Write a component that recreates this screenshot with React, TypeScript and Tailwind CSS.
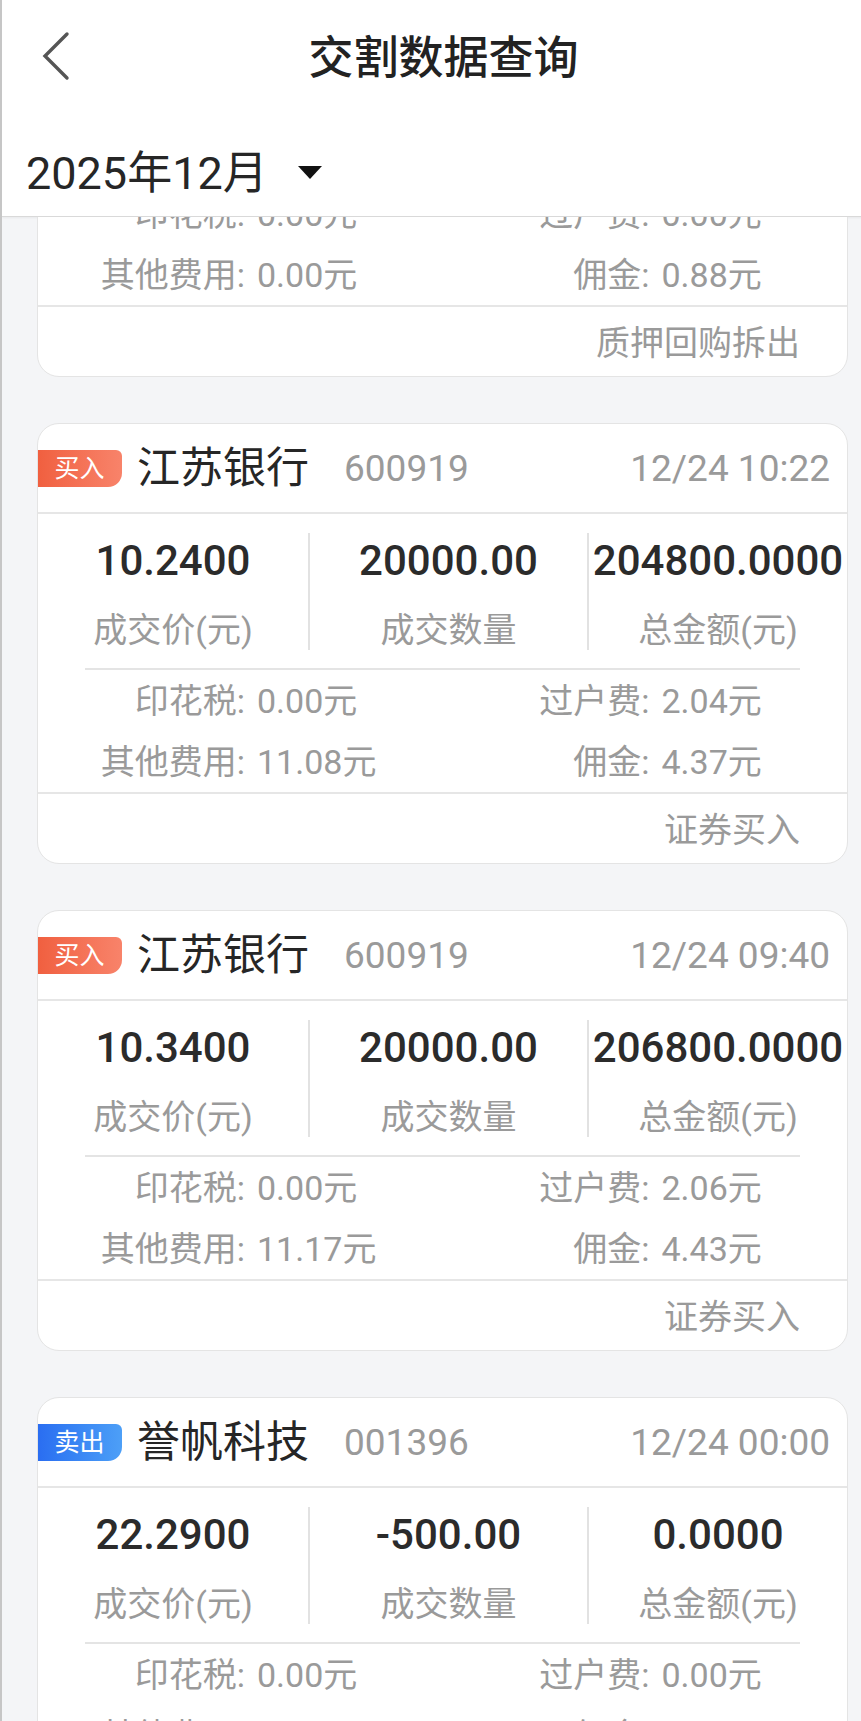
import React from "react";

type Trade = {
  side: "买入" | "卖出";
  name: string;
  code: string;
  time: string;
  price: string;
  qty: string;
  amount: string;
  stamp: string;
  transfer: string;
  other: string;
  commission: string;
  kind: string;
};

const TRADES: Trade[] = [
  {
    side: "卖出",
    name: "GC001",
    code: "204001",
    time: "12/24 14:57",
    price: "1.6500",
    qty: "-10.00",
    amount: "10000.0000",
    stamp: "0.00元",
    transfer: "0.00元",
    other: "0.00元",
    commission: "0.88元",
    kind: "质押回购拆出",
  },
  {
    side: "买入",
    name: "江苏银行",
    code: "600919",
    time: "12/24 10:22",
    price: "10.2400",
    qty: "20000.00",
    amount: "204800.0000",
    stamp: "0.00元",
    transfer: "2.04元",
    other: "11.08元",
    commission: "4.37元",
    kind: "证券买入",
  },
  {
    side: "买入",
    name: "江苏银行",
    code: "600919",
    time: "12/24 09:40",
    price: "10.3400",
    qty: "20000.00",
    amount: "206800.0000",
    stamp: "0.00元",
    transfer: "2.06元",
    other: "11.17元",
    commission: "4.43元",
    kind: "证券买入",
  },
  {
    side: "卖出",
    name: "誉帆科技",
    code: "001396",
    time: "12/24 00:00",
    price: "22.2900",
    qty: "-500.00",
    amount: "0.0000",
    stamp: "0.00元",
    transfer: "0.00元",
    other: "0.00元",
    commission: "0.00元",
    kind: "新股入账",
  },
];

const FONT = { fontFamily: 'Roboto, "Noto Sans CJK SC", sans-serif' };

function Stat({ value, label }: { value: string; label: string }) {
  return (
    <div className="flex flex-col items-center">
      <div className="h-[56px] flex items-center text-[42px] leading-none font-medium text-[#2b2b2b]">
        {value}
      </div>
      <div className="mt-[20px] h-[41px] flex items-center text-[34px] leading-none text-[#9a9a9a]">
        {label}
      </div>
    </div>
  );
}

function Fee({ label, value }: { label: string; value: string }) {
  return (
    <div className="flex items-center">
      <span className="w-[207px] text-right">{label}</span>
      <span className="ml-[12px]">{value}</span>
    </div>
  );
}

function TradeCard({ t }: { t: Trade }) {
  const buy = t.side === "买入";
  return (
    <div className="w-[811px] h-[441px] shrink-0 bg-white border border-[#e4e4e4] rounded-[22px] overflow-hidden flex flex-col">
      {/* header */}
      <div className="h-[88px] flex items-center pr-[17px]">
        <div
          className={
            buy
              ? "w-[85px] h-[37px] -ml-px flex items-center justify-center text-[25px] leading-none text-white rounded-tr-[6px] rounded-br-[14px] bg-linear-to-r from-[#f05f3f] to-[#f8836a]"
              : "w-[85px] h-[37px] -ml-px flex items-center justify-center text-[25px] leading-none text-white rounded-tr-[6px] rounded-br-[14px] bg-linear-to-r from-[#2a6df1] to-[#4d9ff7]"
          }
        >
          {t.side}
        </div>
        <div className="ml-[15px] text-[43px] leading-none text-[#262626]">{t.name}</div>
        <div className="ml-[35px] text-[37px] leading-none text-[#9a9a9a]">{t.code}</div>
        <div className="ml-auto text-[37px] leading-none text-[#9a9a9a]">{t.time}</div>
      </div>
      <div className="h-[2px] bg-[#e6e6e6]" />

      {/* stats */}
      <div className="pt-[19px] pb-[18px] grid grid-cols-[270px_279px_1fr]">
        <Stat value={t.price} label="成交价(元)" />
        <div className="border-l-2 border-[#e2e2e2]">
          <Stat value={t.qty} label="成交数量" />
        </div>
        <div className="border-l-2 border-[#e2e2e2]">
          <Stat value={t.amount} label="总金额(元)" />
        </div>
      </div>
      <div className="mx-[47px] h-[2px] bg-[#e4e4e4]" />

      {/* fees */}
      <div className="grid grid-cols-2 grid-rows-[61px_61px] text-[34px] leading-none text-[#9a9a9a]">
        <Fee label="印花税:" value={t.stamp} />
        <Fee label="过户费:" value={t.transfer} />
        <Fee label="其他费用:" value={t.other} />
        <Fee label="佣金:" value={t.commission} />
      </div>
      <div className="h-[2px] bg-[#e6e6e6]" />

      {/* footer */}
      <div className="flex-1 flex items-center justify-end pt-[3px] pr-[47px] text-[34px] leading-none text-[#9a9a9a]">
        {t.kind}
      </div>
    </div>
  );
}

export default function App() {
  return (
    <div
      className="w-[861px] h-[1721px] overflow-hidden bg-[#f4f5f7] border-l-2 border-[#c6c6c6]"
      style={FONT}
    >
      <div className="w-[883px] h-full flex flex-col">
        {/* header */}
        <div className="h-[217px] shrink-0 bg-white border-b border-[#d9d9d9] shadow-[0_1px_2px_rgba(0,0,0,0.05)] flex flex-col">
          <div className="h-[116px] grid grid-cols-[1fr_auto_1fr] items-center">
            <div className="pl-[40px] pb-[4px] flex items-center">
              <svg width="28" height="50" viewBox="0 0 28 50" fill="none">
                <path
                  d="M25 3 L3 25 L25 47"
                  stroke="#555555"
                  strokeWidth="3.4"
                  strokeLinecap="round"
                  strokeLinejoin="miter"
                />
              </svg>
            </div>
            <div className="text-[45px] leading-none font-medium text-[#222222]">交割数据查询</div>
            <div />
          </div>
          <div className="flex-1 flex items-center pl-[24px] pt-[14px]">
            <span className="text-[45px] leading-none text-[#262626]">2025年12月</span>
            <svg className="ml-[30px]" width="24" height="14" viewBox="0 0 24 14">
              <path d="M0 0 H24 L12 13 Z" fill="#111111" />
            </svg>
          </div>
        </div>

        {/* list */}
        <div className="flex-1 overflow-hidden">
          <div className="mt-[-281px] pl-[35px] flex flex-col gap-[46px]">
            {TRADES.map((t, i) => (
              <TradeCard key={i} t={t} />
            ))}
          </div>
        </div>
      </div>
    </div>
  );
}
